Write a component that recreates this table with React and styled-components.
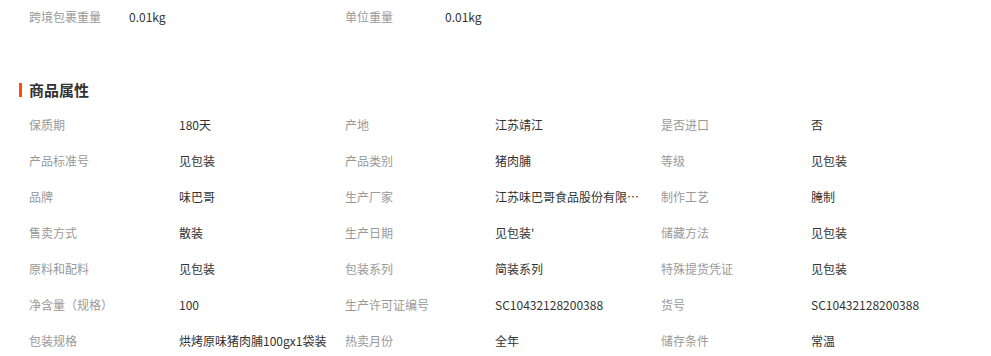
import React from 'react';
import styled, { createGlobalStyle } from 'styled-components';

const GlobalStyle = createGlobalStyle`
  body {
    margin: 0;
    background: #fff;
    font-family: "Noto Sans CJK SC", "Liberation Sans", sans-serif;
  }
`;

const packageInfo = [
  ['跨境包裹重量', '0.01kg'],
  ['单位重量', '0.01kg'],
];

const attributes = [
  ['保质期', '180天'],
  ['产地', '江苏靖江'],
  ['是否进口', '否'],
  ['产品标准号', '见包装'],
  ['产品类别', '猪肉脯'],
  ['等级', '见包装'],
  ['品牌', '味巴哥'],
  ['生产厂家', '江苏味巴哥食品股份有限公司'],
  ['制作工艺', '腌制'],
  ['售卖方式', '散装'],
  ['生产日期', "见包装'"],
  ['储藏方法', '见包装'],
  ['原料和配料', '见包装'],
  ['包装系列', '简装系列'],
  ['特殊提货凭证', '见包装'],
  ['净含量（规格）', '100'],
  ['生产许可证编号', 'SC10432128200388'],
  ['货号', 'SC10432128200388'],
  ['包装规格', '烘烤原味猪肉脯100gx1袋装'],
  ['热卖月份', '全年'],
  ['储存条件', '常温'],
];

export default function App() {
  return (
    <Page>
      <GlobalStyle />
      <Grid>
        {packageInfo.map(([label, value]) => (
          <Cell key={label} height={34}>
            <Label width={100}>{label}</Label>
            <Value>{value}</Value>
          </Cell>
        ))}
      </Grid>

      <SectionTitle>商品属性</SectionTitle>

      <Grid>
        {attributes.map(([label, value]) => (
          <Cell key={label} height={36}>
            <Label width={150}>{label}</Label>
            <Value title={value}>{value}</Value>
          </Cell>
        ))}
      </Grid>
    </Page>
  );
}

const Page = styled.div`
  width: 991px;
  padding: 0 14px 0 29px;
  box-sizing: border-box;
  font-size: 12px;
`;

const Grid = styled.div`
  display: grid;
  grid-template-columns: repeat(3, 316px);
`;

const Cell = styled.div`
  display: flex;
  height: ${(p) => p.height}px;
  line-height: ${(p) => p.height}px;
  padding-right: 18px;
  overflow: hidden;
`;

const Label = styled.span`
  flex: none;
  width: ${(p) => p.width}px;
  color: #999;
  white-space: nowrap;
`;

const Value = styled.span`
  flex: 1;
  min-width: 0;
  color: #333;
  white-space: nowrap;
  overflow: hidden;
  text-overflow: ellipsis;
`;

const SectionTitle = styled.h3`
  position: relative;
  margin: 44px 0 5px;
  height: 24px;
  line-height: 24px;
  font-size: 15px;
  font-weight: bold;
  color: #333;

  &::before {
    content: '';
    position: absolute;
    left: -10px;
    top: 5px;
    width: 3px;
    height: 14px;
    background: #ff5000;
  }
`;
